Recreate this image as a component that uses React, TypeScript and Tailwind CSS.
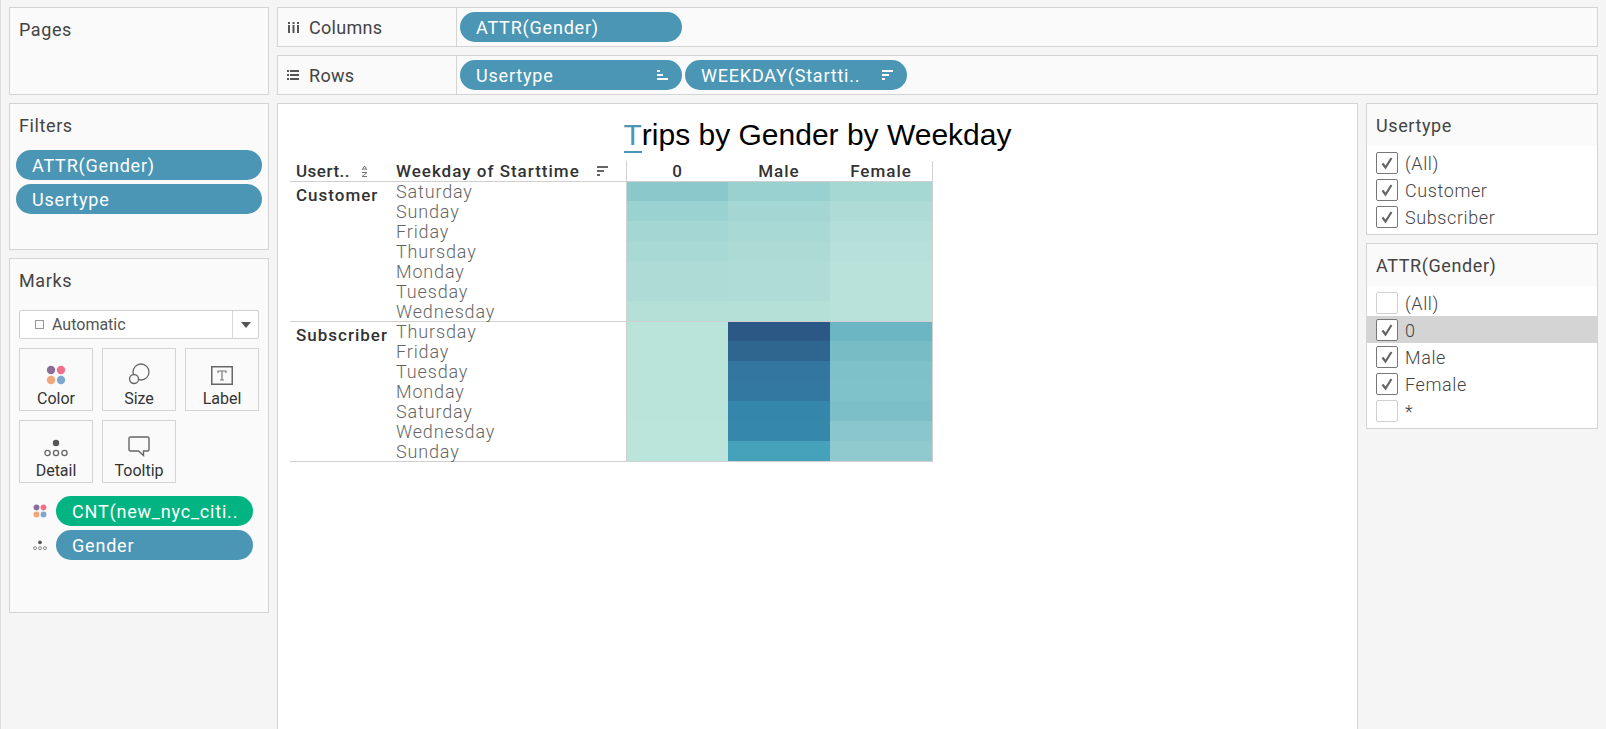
import React from "react";

const Pill = ({ text, width, green, icon }: { text: string; width: string; green?: boolean; icon?: React.ReactNode }) => (
  <div className={`${width} h-[30px] shrink-0 rounded-full ${green ? "bg-[#01b482]" : "bg-[#4b96b4]"} text-white text-[18px] tracking-[0.8px] pl-[16px] pr-[14px] flex items-center justify-between whitespace-nowrap`}>
    <span>{text}</span>
    {icon}
  </div>
);

const SortDesc = ({ color = "#ffffff" }: { color?: string }) => (
  <svg width="11" height="10" viewBox="0 0 11 10" fill={color}>
    <rect x="0" y="0" width="11" height="2" />
    <rect x="0" y="4" width="7" height="2" />
    <rect x="0" y="8" width="3" height="2" />
  </svg>
);

const SortAsc = () => (
  <svg width="11" height="10" viewBox="0 0 11 10" fill="#ffffff">
    <rect x="0" y="0" width="3" height="2" />
    <rect x="0" y="4" width="6" height="2" />
    <rect x="0" y="8" width="11" height="2" />
  </svg>
);

const ColorDots = ({ size = 24 }: { size?: number }) => (
  <svg width={size} height={size} viewBox="0 0 24 24">
    <circle cx="6" cy="6" r="5" fill="#8a6d9a" />
    <circle cx="18" cy="6" r="5" fill="#f0708a" />
    <circle cx="6" cy="18" r="5" fill="#f2a67c" />
    <circle cx="18" cy="18" r="5" fill="#7fa6d0" />
  </svg>
);

const DetailDots = ({ size = 24 }: { size?: number }) => (
  <svg width={size} height={(size * 18) / 24} viewBox="0 0 24 18" fill="none" stroke="#666666" strokeWidth="1.3">
    <circle cx="12" cy="4" r="3.2" fill="#555555" stroke="none" />
    <circle cx="3.5" cy="14" r="2.6" />
    <circle cx="12" cy="14" r="2.6" />
    <circle cx="20.5" cy="14" r="2.6" />
  </svg>
);

const MarkButton = ({ label, icon }: { label: string; icon: React.ReactNode }) => (
  <div className="w-[74px] h-[63px] border border-[#d4d4d4] flex flex-col items-center text-[16px] text-[#333333]">
    <div className="h-[39px] flex items-end justify-center pb-[3px]">{icon}</div>
    <div className="leading-[20px] pt-[1px]">{label}</div>
  </div>
);

const Check = ({ on }: { on: boolean }) => (
  <div className={`w-[22px] h-[22px] shrink-0 rounded-[2px] border bg-white flex items-center justify-center ${on ? "border-[#777777]" : "border-[#d0d0d0]"}`}>
    {on && (
      <svg width="14" height="14" viewBox="0 0 14 14" fill="none" stroke="#666666" strokeWidth="2.2">
        <path d="M2.5 7.5 L5.5 11.5 L11.5 2" />
      </svg>
    )}
  </div>
);

const FilterRow = ({ label, on, active }: { label: string; on: boolean; active?: boolean }) => (
  <div className={`h-[27px] pl-[9px] flex items-center gap-[7px] text-[18px] tracking-[0.6px] font-light text-[#444444] ${active ? "bg-[#d4d4d4]" : ""}`}>
    <Check on={on} />
    <span className="pt-[1px]">{label}</span>
  </div>
);

const FilterCard = ({ title, items, h }: { title: string; items: { l: string; on: boolean; a?: boolean }[]; h: string }) => (
  <div className={`${h} border border-[#d4d4d4] bg-white flex flex-col`}>
    <div className="h-[42px] shrink-0 bg-[#fafafa] pl-[9px] pt-[10px] text-[18px] tracking-[0.6px] text-[#444444] leading-[24px]">{title}</div>
    <div className="pt-[3px]">
      {items.map((i) => (
        <FilterRow key={i.l} label={i.l} on={i.on} active={i.a} />
      ))}
    </div>
  </div>
);

const Section = ({ name, days, colors }: { name: string; days: string[]; colors: string[][] }) => (
  <div className="flex border-b border-[#d0d0d0]">
    <div className="w-[106px] pl-[6px] text-[17px] tracking-[1px] font-medium text-[#333333] leading-[26px] whitespace-nowrap">{name}</div>
    <div className="w-[230px] text-[18px] tracking-[0.85px] font-light text-[#666666]">
      {days.map((d, i) => (
        <div key={d} className={`${i === 0 ? "h-[19px] leading-[20px]" : "h-[20px] leading-[22px]"} whitespace-nowrap`}>{d}</div>
      ))}
    </div>
    <div className="w-[307px] border-x border-[#d0d0d0]">
      {days.map((d, i) => (
        <div key={d} className={`${i === 0 ? "h-[19px]" : "h-[20px]"} flex`}>
          {colors.map((c, j) => (
            <div key={j} className={j === 0 ? "w-[101px]" : "w-[102px]"} style={{ backgroundColor: c[i] }} />
          ))}
        </div>
      ))}
    </div>
  </div>
);

export default function App() {
  const cust = [
    ["#8ac8cc", "#9ad2d2", "#a4d6d3", "#a9d9d4", "#aedbd6", "#aedbd6", "#b5e0d8"],
    ["#99d0d0", "#a4d7d3", "#a8d9d4", "#acdad5", "#b0dcd7", "#b0dcd7", "#b5e0d8"],
    ["#a5d7d3", "#aedbd6", "#b3dfd8", "#b6e0d9", "#b8e2da", "#b8e2da", "#b9e3da"],
  ];
  const sub = [
    ["#bae3d9", "#bae3d9", "#bae3d9", "#bae3d9", "#bae3d9", "#bbe4da", "#bbe4da"],
    ["#2c5885", "#2f668f", "#33779e", "#33789f", "#3487aa", "#3688ab", "#46a2bb"],
    ["#6cb5c3", "#78bcc6", "#7ec1c8", "#80c2c9", "#7cbfc8", "#8ac7cd", "#90cacf"],
  ];
  return (
    <div className="w-[1606px] h-[729px] overflow-hidden bg-[#f5f5f5] border-l border-[#dddddd] pl-[8px] pt-[7px] flex gap-[8px] font-['Roboto',sans-serif]">
      <div className="w-[260px] shrink-0 flex flex-col gap-[8px]">
        <div className="h-[88px] border border-[#d4d4d4] bg-[#fafafa] pl-[9px] pt-[10px] text-[18px] tracking-[0.6px] leading-[24px] text-[#444444]">Pages</div>
        <div className="h-[147px] border border-[#d4d4d4] bg-[#fafafa] px-[6px]">
          <div className="pl-[3px] pt-[10px] h-[46px] text-[18px] tracking-[0.6px] leading-[24px] text-[#444444]">Filters</div>
          <div className="flex flex-col gap-[4px]">
            <Pill text="ATTR(Gender)" width="w-[246px]" />
            <Pill text="Usertype" width="w-[246px]" />
          </div>
        </div>
        <div className="h-[355px] border border-[#d4d4d4] bg-[#fafafa] px-[9px]">
          <div className="pt-[10px] h-[51px] text-[18px] tracking-[0.6px] leading-[24px] text-[#444444]">Marks</div>
          <div className="w-[240px] h-[29px] border border-[#d0d0d0] rounded-[2px] bg-white flex items-center text-[16px] text-[#555555]">
            <div className="flex-1 flex items-center pl-[15px] gap-[8px]">
              <span className="w-[9px] h-[9px] border border-[#999999] bg-[#fafafa]" />
              <span>Automatic</span>
            </div>
            <div className="w-[26px] h-full border-l border-[#d8d8d8] flex items-center justify-center">
              <svg width="10" height="6" viewBox="0 0 10 6" fill="#555555"><path d="M0 0 L10 0 L5 6 Z" /></svg>
            </div>
          </div>
          <div className="grid grid-cols-[74px_74px_74px] gap-x-[9px] gap-y-[9px] mt-[9px]">
            <MarkButton label="Color" icon={<ColorDots size={20} />} />
            <MarkButton
              label="Size"
              icon={
                <svg width="22" height="22" viewBox="0 0 22 22" fill="none" stroke="#666666" strokeWidth="1.3">
                  <circle cx="13" cy="9" r="8" fill="#fafafa" />
                  <circle cx="6" cy="16" r="4.5" fill="#fafafa" />
                </svg>
              }
            />
            <MarkButton
              label="Label"
              icon={
                <svg width="22" height="19" viewBox="0 0 22 19" fill="none">
                  <rect x="0.75" y="0.75" width="20.5" height="17.5" stroke="#666666" strokeWidth="1.5" />
                  <path d="M7 7 V5 H15 V7 M11 5 V14 M9 14 H13" stroke="#777777" strokeWidth="1.2" />
                </svg>
              }
            />
            <MarkButton label="Detail" icon={<DetailDots />} />
            <MarkButton
              label="Tooltip"
              icon={
                <svg width="22" height="21" viewBox="0 0 22 21" fill="none" stroke="#666666" strokeWidth="1.4">
                  <path d="M2.5 1 H19.5 Q21 1 21 2.5 V13.5 Q21 15 19.5 15 H15.5 V19.5 L10.5 15 H2.5 Q1 15 1 13.5 V2.5 Q1 1 2.5 1 Z" />
                </svg>
              }
            />
          </div>
          <div className="mt-[13px] flex flex-col gap-[4px]">
            <div className="flex items-center">
              <div className="w-[37px] pl-[14px]"><ColorDots size={14} /></div>
              <Pill text="CNT(new_nyc_citi.." width="w-[197px]" green />
            </div>
            <div className="flex items-center">
              <div className="w-[37px] pl-[14px]"><DetailDots size={14} /></div>
              <Pill text="Gender" width="w-[197px]" />
            </div>
          </div>
        </div>
      </div>

      <div className="w-[1321px] shrink-0 flex flex-col gap-[8px]">
        <div className="h-[40px] border border-[#d4d4d4] bg-[#fafafa] flex items-center">
          <div className="w-[179px] h-full border-r border-[#d4d4d4] flex items-center text-[18px] tracking-[0.3px] text-[#444444]">
            <div className="w-[31px] pl-[10px]">
              <svg width="11" height="11" viewBox="0 0 11 11" fill="#555555">
                <rect x="0" y="3" width="2" height="8" /><rect x="0" y="0" width="2" height="2" />
                <rect x="4.5" y="3" width="2" height="8" /><rect x="4.5" y="0" width="2" height="2" />
                <rect x="9" y="3" width="2" height="8" /><rect x="9" y="0" width="2" height="2" />
              </svg>
            </div>
            <span>Columns</span>
          </div>
          <div className="pl-[3px]"><Pill text="ATTR(Gender)" width="w-[222px]" /></div>
        </div>
        <div className="h-[40px] border border-[#d4d4d4] bg-[#fafafa] flex items-center">
          <div className="w-[179px] h-full border-r border-[#d4d4d4] flex items-center text-[18px] tracking-[0.3px] text-[#444444]">
            <div className="w-[31px] pl-[9px]">
              <svg width="12" height="10" viewBox="0 0 12 10" fill="#555555">
                <rect x="0" y="0" width="2" height="2" /><rect x="3" y="0" width="9" height="2" />
                <rect x="0" y="4" width="2" height="2" /><rect x="3" y="4" width="9" height="2" />
                <rect x="0" y="8" width="2" height="2" /><rect x="3" y="8" width="9" height="2" />
              </svg>
            </div>
            <span>Rows</span>
          </div>
          <div className="pl-[3px] flex gap-[3px]">
            <Pill text="Usertype" width="w-[222px]" icon={<SortAsc />} />
            <Pill text="WEEKDAY(Startti.." width="w-[222px]" icon={<SortDesc />} />
          </div>
        </div>
        <div className="flex-1 flex gap-[8px] min-h-0">
          <div className="w-[1082px] border-x border-t border-[#d4d4d4] bg-white pl-[12px]">
            <div className="h-[57px] pr-[12px] pt-[13px] text-center text-[30px] leading-[36px] text-black font-['Liberation_Sans',sans-serif]">
              <span className="text-[#4b96b4] border-b-2 border-[#4b96b4] leading-[30px] inline-block h-[33px]">T</span>rips by Gender by Weekday
            </div>
            <div className="w-[643px]">
              <div className="h-[21px] flex border-b border-[#d0d0d0] text-[17px] tracking-[1px] font-medium text-[#333333] leading-[20px]">
                <div className="w-[106px] pl-[6px] flex items-center">
                  <span className="tracking-[0.5px]">Usert..</span>
                  <svg className="ml-[11px]" width="7" height="12" viewBox="0 0 7 12" fill="none" stroke="#777777" strokeWidth="1">
                    <path d="M1 5 L3.5 1 L6 5 M2 4 H5 M1 7.5 H6 L1 11.5 H6" />
                  </svg>
                </div>
                <div className="w-[230px] flex items-center whitespace-nowrap">
                  <span>Weekday of Starttime</span>
                  <span className="ml-[17px]"><SortDesc color="#666666" /></span>
                </div>
                <div className="w-[307px] border-x border-[#d0d0d0] flex">
                  <div className="w-[101px] text-center">0</div>
                  <div className="w-[102px] text-center">Male</div>
                  <div className="w-[102px] text-center">Female</div>
                </div>
              </div>
              <Section name="Customer" days={["Saturday", "Sunday", "Friday", "Thursday", "Monday", "Tuesday", "Wednesday"]} colors={cust} />
              <Section name="Subscriber" days={["Thursday", "Friday", "Tuesday", "Monday", "Saturday", "Wednesday", "Sunday"]} colors={sub} />
            </div>
          </div>
          <div className="w-[232px] shrink-0 flex flex-col gap-[8px]">
            <FilterCard
              title="Usertype"
              h="h-[132px]"
              items={[
                { l: "(All)", on: true },
                { l: "Customer", on: true },
                { l: "Subscriber", on: true },
              ]}
            />
            <FilterCard
              title="ATTR(Gender)"
              h="h-[186px]"
              items={[
                { l: "(All)", on: false },
                { l: "0", on: true, a: true },
                { l: "Male", on: true },
                { l: "Female", on: true },
                { l: "*", on: false },
              ]}
            />
          </div>
        </div>
      </div>
    </div>
  );
}
